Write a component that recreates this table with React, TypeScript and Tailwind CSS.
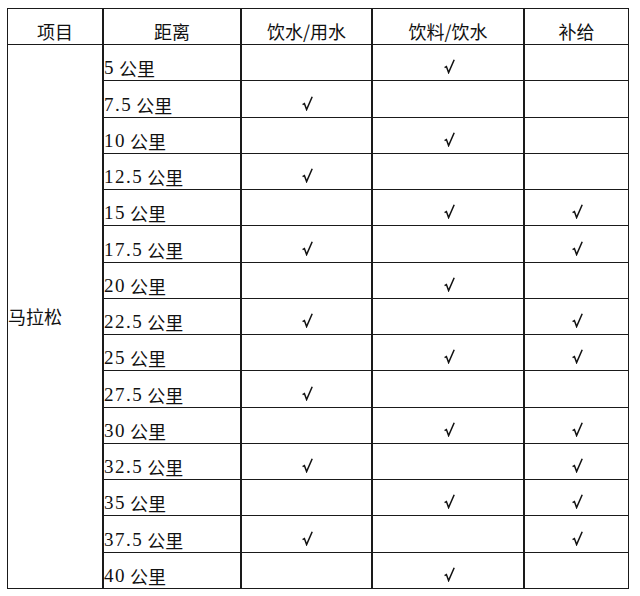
import React from "react";

type Row = {
  dist: string;
  water: boolean;
  drink: boolean;
  supply: boolean;
};

const rows: Row[] = [
  { dist: "5", water: false, drink: true, supply: false },
  { dist: "7.5", water: true, drink: false, supply: false },
  { dist: "10", water: false, drink: true, supply: false },
  { dist: "12.5", water: true, drink: false, supply: false },
  { dist: "15", water: false, drink: true, supply: true },
  { dist: "17.5", water: true, drink: false, supply: true },
  { dist: "20", water: false, drink: true, supply: false },
  { dist: "22.5", water: true, drink: false, supply: true },
  { dist: "25", water: false, drink: true, supply: true },
  { dist: "27.5", water: true, drink: false, supply: false },
  { dist: "30", water: false, drink: true, supply: true },
  { dist: "32.5", water: true, drink: false, supply: true },
  { dist: "35", water: false, drink: true, supply: true },
  { dist: "37.5", water: true, drink: false, supply: true },
  { dist: "40", water: false, drink: true, supply: false },
];

const headers = ["项目", "距离", "饮水/用水", "饮料/饮水", "补给"];

function Check({ on }: { on: boolean }) {
  return (
    <div className="bg-white flex items-end justify-center pb-[6px]">
      {on && (
        <svg width="11" height="15" viewBox="0 0 11 15" className="ml-[2px]">
          <path
            d="M0.6 8.6 L2.4 7.6 L4.6 13.6 L10.2 0.8"
            fill="none"
            stroke="#111"
            strokeWidth="1.5"
            strokeLinejoin="miter"
          />
        </svg>
      )}
    </div>
  );
}

export default function App() {
  return (
    <div className="w-[640px] h-[596px] bg-white pt-[8px] pl-[7px] font-['Noto_Sans_CJK_SC',sans-serif] text-[#111]">
      <div className="w-[622px] h-[581px] bg-[#1a1a1a] p-px grid grid-cols-[94px_136px_129px_150px_103px] grid-rows-[35px_repeat(15,minmax(0,1fr))] gap-x-[2px] gap-y-px">
        {headers.map((h) => (
          <div
            key={h}
            className="bg-white flex items-end justify-center pb-[4px] text-[18px] leading-none"
          >
            {h}
          </div>
        ))}

        <div className="bg-white row-span-15 flex items-center text-[18px] leading-none">
          马拉松
        </div>

        {rows.map((r) => (
          <React.Fragment key={r.dist}>
            <div className="bg-white flex items-end pb-[3px] text-[18px] leading-none">
              <span className="text-[19px] tracking-[1.5px] font-['Liberation_Serif',serif]">
                {r.dist}
              </span>
              <span className="ml-[4px]">公里</span>
            </div>
            <Check on={r.water} />
            <Check on={r.drink} />
            <Check on={r.supply} />
          </React.Fragment>
        ))}
      </div>
    </div>
  );
}
